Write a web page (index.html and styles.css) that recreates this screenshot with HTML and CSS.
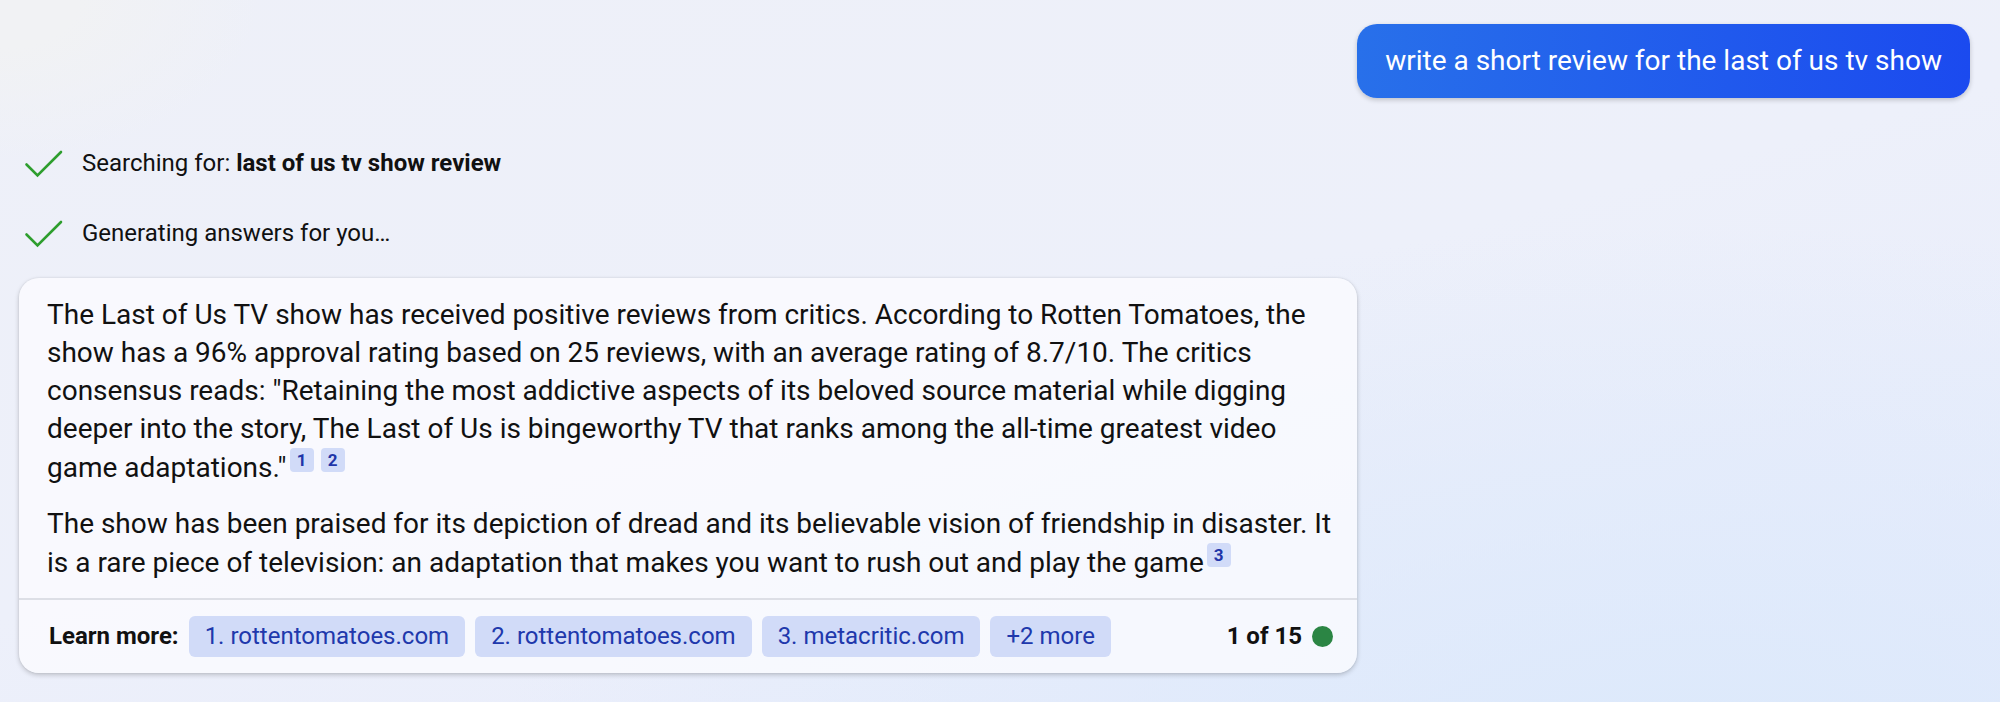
FILE: index.html
```html
<!DOCTYPE html>
<html lang="en">
<head>
  <meta charset="UTF-8">
  <meta name="viewport" content="width=device-width, initial-scale=1.0">
  <title>Chat</title>
  <link rel="stylesheet" href="styles.css">
</head>
<body>
  <main class="chat">
    <!-- User message -->
    <div class="user-message">write a short review for the last of us tv show</div>

    <!-- Progress steps -->
    <ul class="steps">
      <li class="step">
        <svg class="check" viewBox="0 0 40 30" aria-hidden="true"><path d="M2.500 16.500 L13.500 27.500 L37 4"/></svg>
        <span>Searching for: <strong>last of us tv show review</strong></span>
      </li>
      <li class="step">
        <svg class="check" viewBox="0 0 40 30" aria-hidden="true"><path d="M2.500 16.500 L13.500 27.500 L37 4"/></svg>
        <span>Generating answers for you…</span>
      </li>
    </ul>

    <!-- Answer -->
    <article class="answer">
      <div class="answer-text">
        <p>The Last of Us TV show has received positive reviews from critics. According to Rotten Tomatoes, the show has a 96% approval rating based on 25 reviews, with an average rating of 8.7/10. The critics consensus reads: "Retaining the most addictive aspects of its beloved source material while digging deeper into the story, The Last of Us is bingeworthy TV that ranks among the all-time greatest video game adaptations."<a class="cite" href="#source-1">1</a><a class="cite" href="#source-2">2</a></p>
        <p>The show has been praised for its depiction of dread and its believable vision of friendship in disaster. It is a rare piece of television: an adaptation that makes you want to rush out and play the game<a class="cite" href="#source-3">3</a></p>
      </div>
      <footer class="answer-footer">
        <span class="learn-more">Learn more:</span>
        <a class="source" id="source-1" href="#">1. rottentomatoes.com</a>
        <a class="source" id="source-2" href="#">2. rottentomatoes.com</a>
        <a class="source" id="source-3" href="#">3. metacritic.com</a>
        <button class="source" type="button">+2 more</button>
        <div class="turns">1 of 15 <span class="dot"></span></div>
      </footer>
    </article>
  </main>
</body>
</html>
```

FILE: styles.css
```css
* {
  margin: 0;
  padding: 0;
  box-sizing: border-box;
}

body {
  min-height: 100vh;
  font-family: Roboto, "Liberation Sans", sans-serif;
  color: #111;
  background:
    radial-gradient(ellipse 260px 160px at 0 0, #f1f2f4 30%, rgba(241, 242, 244, 0)),
    radial-gradient(ellipse at 85% 110%, #dce9fb 0, rgba(220, 233, 251, 0) 50%),
    linear-gradient(165deg, #eef0f8 0%, #edf0fa 50%, #e6ebfc 100%);
}

.chat {
  display: flex;
  flex-direction: column;
  padding: 24px 30px 20px 19px;
}

.user-message {
  align-self: flex-end;
  padding: 18px 28px;
  border-radius: 20px;
  font-size: 28px;
  line-height: 38px;
  color: #fff;
  background: linear-gradient(90deg, #2870ea, #1b4aef);
  box-shadow: 0 2px 5px rgba(0, 0, 0, 0.2);
}

.steps {
  display: flex;
  flex-direction: column;
  gap: 38px;
  margin: 49px 0 29px;
  padding-left: 5px;
  list-style: none;
}

.step {
  display: flex;
  align-items: center;
  gap: 18px;
  font-size: 24px;
  line-height: 32px;
}

.check {
  width: 40px;
  height: 30px;
  fill: none;
  stroke: #2e9e2e;
  stroke-width: 2.6;
  stroke-linecap: round;
}

.answer {
  width: 100%;
  max-width: 1338px;
  border-radius: 20px;
  background: rgba(252, 252, 255, 0.75);
  box-shadow: 0 2px 5px rgba(0, 0, 0, 0.2), 0 0 2px rgba(0, 0, 0, 0.1);
}

.answer-text {
  display: flex;
  flex-direction: column;
  gap: 18px;
  padding: 18px 20px 16px 28px;
  font-size: 28px;
  line-height: 38px;
}

.cite {
  display: inline-block;
  width: 24px;
  margin-left: 3px;
  border-radius: 4px;
  font-size: 17px;
  font-weight: 700;
  line-height: 24px;
  text-align: center;
  text-decoration: none;
  vertical-align: 11px;
  color: #1f35a8;
  background: #d1dbf8;
}

.cite + .cite {
  margin-left: 7px;
}

.answer-footer {
  display: flex;
  align-items: center;
  gap: 10px;
  padding: 16px 24px 16px 30px;
  border-top: 2px solid #dddfe6;
  font-size: 24px;
  line-height: 41px;
}

.learn-more {
  font-weight: 700;
}

.source {
  padding: 0 16px;
  border: 0;
  border-radius: 6px;
  font: inherit;
  text-decoration: none;
  color: #2038ac;
  background: #d1dbf8;
  cursor: pointer;
}

.turns {
  display: flex;
  align-items: center;
  gap: 10px;
  margin-left: auto;
  font-weight: 700;
}

.dot {
  width: 21px;
  height: 21px;
  border-radius: 50%;
  background: #2b8544;
}
```
